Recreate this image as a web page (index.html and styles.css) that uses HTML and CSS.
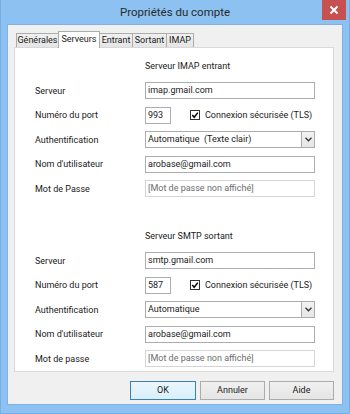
FILE: index.html
```html
<!DOCTYPE html>
<html>
<head>
  <meta charset="UTF-8">
  <title>Propriétés du compte</title>
  <link rel="stylesheet" href="styles.css">
</head>
<body>
  <div class="window">
    <div class="titlebar">
      <span class="title">Propriétés du compte</span>
      <span class="close">
        <svg width="10" height="10" viewBox="0 0 10 10"><path d="M1.5 1.5 L8.5 8.5 M8.5 1.5 L1.5 8.5" stroke="#fff" stroke-width="2"/></svg>
      </span>
    </div>

    <div class="client">
      <div class="tabs">
        <span class="tab t-gen">Générales</span>
        <span class="tab t-srv active">Serveurs</span>
        <span class="tab t-in">Entrant</span>
        <span class="tab t-out">Sortant</span>
        <span class="tab t-imap">IMAP</span>
      </div>

      <div class="panel">
        <div class="group">
          <div class="group-title">Serveur IMAP entrant</div>
          <div class="form">
            <span class="label">Serveur</span>
            <div class="field">imap.gmail.com</div>

            <span class="label">Numéro du port</span>
            <div class="port-row">
              <div class="field port">993</div>
              <span class="check">
                <svg width="10" height="10" viewBox="0 0 10 10"><rect x="0.5" y="0.5" width="9" height="9" fill="#fff" stroke="#333"/><path d="M2.3 5 L4.2 7.2 L7.8 2.6" fill="none" stroke="#000" stroke-width="1.5"/></svg>
                Connexion sécurisée (TLS)
              </span>
            </div>

            <span class="label">Authentification</span>
            <div class="select"><span class="select-text">Automatique  (Texte clair)</span><span class="arrow"><svg width="7" height="5" viewBox="0 0 7 5"><path d="M0.5 0.8 L3.5 3.8 L6.5 0.8" fill="none" stroke="#333" stroke-width="1.3"/></svg></span></div>

            <span class="label">Nom d'utilisateur</span>
            <div class="field">arobase@gmail.com</div>

            <span class="label">Mot de Passe</span>
            <div class="field muted">[Mot de passe non affiché]</div>
          </div>
        </div>

        <div class="group second">
          <div class="group-title">Serveur SMTP sortant</div>
          <div class="form">
            <span class="label">Serveur</span>
            <div class="field">smtp.gmail.com</div>

            <span class="label">Numéro du port</span>
            <div class="port-row">
              <div class="field port">587</div>
              <span class="check">
                <svg width="10" height="10" viewBox="0 0 10 10"><rect x="0.5" y="0.5" width="9" height="9" fill="#fff" stroke="#333"/><path d="M2.3 5 L4.2 7.2 L7.8 2.6" fill="none" stroke="#000" stroke-width="1.5"/></svg>
                Connexion sécurisée (TLS)
              </span>
            </div>

            <span class="label">Authentification</span>
            <div class="select"><span class="select-text">Automatique</span><span class="arrow"><svg width="7" height="5" viewBox="0 0 7 5"><path d="M0.5 0.8 L3.5 3.8 L6.5 0.8" fill="none" stroke="#333" stroke-width="1.3"/></svg></span></div>

            <span class="label">Nom d'utilisateur</span>
            <div class="field">arobase@gmail.com</div>

            <span class="label">Mot de passe</span>
            <div class="field muted">[Mot de passe non affiché]</div>
          </div>
        </div>
      </div>

      <div class="buttons">
        <span class="btn default">OK</span>
        <span class="btn">Annuler</span>
        <span class="btn">Aide</span>
      </div>
    </div>
  </div>
</body>
</html>
```

FILE: styles.css
```css
body {
  margin: 0;
  font-family: Roboto, 'Noto Sans', sans-serif;
  font-size: 9px;
  color: #1a1a1a;
}
.window {
  position: relative;
  width: 350px;
  height: 414px;
  box-sizing: border-box;
  background: #8cc1f2;
  border: 1px solid #74aee6;
  border-top: none;
  padding: 0 6px 8px 6px;
}
.titlebar {
  height: 24px;
  line-height: 24px;
  text-align: center;
}
.title {
  font-size: 11.5px;
  color: #2a2a2a;
}
.close {
  position: absolute;
  top: 0;
  right: 3px;
  width: 24px;
  height: 20px;
  background: #c75050;
  display: flex;
  align-items: center;
  justify-content: center;
}
.client {
  height: 381px;
  box-sizing: border-box;
  background: #f0f0f0;
  border: 1px solid #7eb2e4;
  padding: 6px 0 0 6px;
}
.tabs {
  display: flex;
  align-items: flex-end;
  height: 16px;
  padding-left: 2px;
}
.tab {
  position: relative;
  height: 14px;
  line-height: 13px;
  box-sizing: border-box;
  border: 1px solid #acacac;
  border-bottom: none;
  margin-right: -1px;
  background: linear-gradient(#f0f0f0, #e5e5e5);
  text-align: center;
  white-space: nowrap;
}
.t-gen { width: 43px; }
.t-srv { width: 42px; }
.t-in { width: 34px; }
.t-out { width: 35px; }
.t-imap { width: 28px; }
.tab.active {
  height: 17px;
  line-height: 15px;
  margin-bottom: -1px;
  background: #fff;
  z-index: 1;
}
.panel {
  width: 320px;
  height: 325px;
  box-sizing: border-box;
  background: #fff;
  border: 1px solid #d9d9d9;
  padding: 10px 0 0 20px;
}
.group-title {
  height: 16px;
  line-height: 16px;
  margin: 0 0 8px 110px;
}
.group.second {
  margin-top: 31px;
}
.form {
  display: grid;
  grid-template-columns: 110px 170px;
  grid-auto-rows: 17px;
  row-gap: 7.5px;
  align-items: center;
  white-space: nowrap;
}
.field {
  height: 17px;
  line-height: 15px;
  box-sizing: border-box;
  border: 1px solid #abadb3;
  padding-left: 2px;
  background: #fff;
}
.field.muted {
  border-color: #d5d5d5;
  color: #6d6d6d;
}
.port-row {
  display: flex;
  align-items: center;
}
.field.port {
  width: 26px;
}
.check {
  display: flex;
  align-items: center;
  gap: 5px;
  margin-left: 19px;
}
.select {
  display: flex;
  height: 17px;
  box-sizing: border-box;
  border: 1px solid #acacac;
  background: #fff;
}
.select-text {
  flex: 1;
  line-height: 15px;
  padding-left: 2px;
  white-space: pre;
}
.arrow {
  width: 12px;
  border-left: 1px solid #acacac;
  background: linear-gradient(#f2f2f2, #e6e6e6);
  display: flex;
  align-items: center;
  justify-content: center;
}
.buttons {
  display: flex;
  justify-content: flex-end;
  gap: 4px;
  margin-top: 9px;
  padding-right: 8px;
}
.btn {
  width: 65px;
  height: 19px;
  line-height: 17px;
  box-sizing: border-box;
  border: 1px solid #acacac;
  background: linear-gradient(#f0f0f0, #e5e5e5);
  text-align: center;
}
.btn.default {
  width: 66px;
  border-color: #3c7fb1;
  background: linear-gradient(#eaf6fd, #d9f0fc);
}
```
